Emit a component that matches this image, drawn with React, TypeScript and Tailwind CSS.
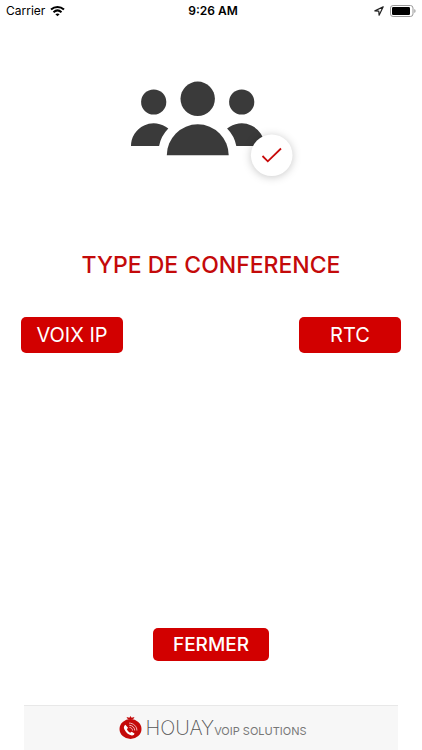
function StatusBar() {
  return (
    <header className="grid h-[22px] grid-cols-3 items-center px-[6px] text-xs text-black">
      <div className="flex items-center gap-[5px]">
        <span>Carrier</span>
        <svg width="15" height="12" viewBox="0 0 15 12" fill="none" stroke="#000" strokeWidth="2" aria-hidden="true">
          <path d="M1 4.6C4.8 1 10.2 1 14 4.6" />
          <path d="M3.5 7.2c2.4-2.2 5.6-2.2 8 0" />
          <path d="M5.4 9.2c1.2-1.1 3-1.1 4.2 0L7.5 11.3z" fill="#000" stroke="none" />
        </svg>
      </div>
      <span className="pl-1 text-center font-semibold">9:26 AM</span>
      <div className="flex items-center justify-end gap-[6px]">
        <svg width="10" height="10" viewBox="0 0 10 10" fill="none" stroke="#222" strokeWidth="1.2" strokeLinejoin="round" aria-hidden="true">
          <path d="M9.2.8.9 4.9l3.9.3.3 4z" />
        </svg>
        <svg width="26" height="12" viewBox="0 0 26 12" aria-hidden="true">
          <rect x="0.5" y="0.5" width="22.5" height="11" rx="2.6" fill="#fff" stroke="#999" />
          <rect x="2" y="2" width="18" height="8" rx="1.2" fill="#000" />
          <path d="M24.3 4v4c1.7-.7 1.7-3.3 0-4z" fill="#999" />
        </svg>
      </div>
    </header>
  );
}

function ConferenceIcon() {
  return (
    <svg width="182" height="116" viewBox="120 70 182 116" role="img" aria-label="Conférence" className="mx-auto">
      <g fill="#3a3a3a">
        <circle cx="153.7" cy="102" r="12.6" />
        <circle cx="197.7" cy="98.8" r="17.2" />
        <circle cx="241.7" cy="102" r="12.6" />
        <path d="M131 146A22.7 22.7 0 0 1 168.3 128.6Q161 136 159.1 146z" />
        <path d="M264.4 146A22.7 22.7 0 0 0 227.1 128.6Q234.4 136 236.3 146z" />
        <path d="M166.8 155.3a30.95 31 0 0 1 61.9 0z" />
      </g>
      <circle cx="271.7" cy="155.3" r="20.8" fill="#fff" className="drop-shadow-[0_1px_4px_rgba(0,0,0,0.22)]" />
      <path d="m262.5 156 5.3 5.3L281 148.500" fill="none" stroke="#c80a0a" strokeWidth="1.8" />
    </svg>
  );
}

function Logo() {
  return (
    <svg width="23" height="24" viewBox="0 0 23 24" aria-hidden="true">
      <path d="M11.5 0l1.1 1.7 2.9-.6-1.5 2.5h-5L7.500 1.100l2.900.6z" fill="#c40a0a" />
      <ellipse cx="11.5" cy="13" rx="11" ry="10" fill="#c40a0a" />
      <path d="M6.400 8.700c-1.700 1-2 3-.8 5.100 1.700 3.300 4.300 5.300 7.200 5.700 1.500.1 2.500-.7 2.700-2l-2.800-1.800-1.600 1.100c-1.500-.8-2.600-2-3.200-3.500l1.100-1.500z" fill="#fff" />
      <g fill="none" stroke="#fff" strokeWidth="0.7">
        <path d="M10.5 11.5c1.8 0 3 1.3 3 3" />
        <path d="M10.3 9.3c3 0 5.4 2.2 5.4 5.2" />
        <path d="M10.1 7.1c4.3 0 7.8 3.2 7.8 7.4" />
      </g>
    </svg>
  );
}

const choiceButton =
  "flex h-9 w-[102px] items-center justify-center rounded-[5px] bg-[#d20000] text-xl text-white";

export default function App() {
  return (
    <div className="flex min-h-screen flex-col bg-white font-[Inter,sans-serif]">
      <StatusBar />
      <main className="flex flex-1 flex-col pt-12">
        <ConferenceIcon />
        <h1 className="mt-[63px] text-center text-[23px] leading-8 font-medium text-[#c40a0a]">
          TYPE DE CONFERENCE
        </h1>
        <div className="mt-9 flex justify-between px-[21px]">
          <button type="button" className={choiceButton}>VOIX IP</button>
          <button type="button" className={choiceButton}>RTC</button>
        </div>
        <button
          type="button"
          className="mx-auto mt-auto mb-11 h-[33px] w-[116px] rounded-[5px] bg-[#d20000] text-[19px] leading-none font-medium text-white"
        >
          FERMER
        </button>
      </main>
      <footer className="mx-6 flex h-[45px] items-center justify-center gap-[3px] border-t border-[#e8e8e8] bg-[#f7f7f7] pl-1">
        <Logo />
        <p className="flex items-baseline text-[#777]">
          <span className="text-xl leading-7 font-extralight text-[#555]">HOUAY</span>
          <span className="text-[11px]">VOIP SOLUTIONS</span>
        </p>
      </footer>
    </div>
  );
}
